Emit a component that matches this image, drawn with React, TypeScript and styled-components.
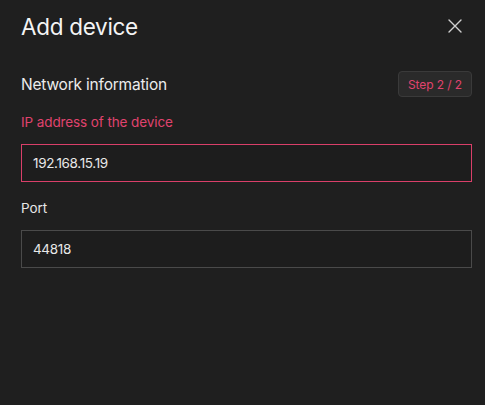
import styled, { createGlobalStyle } from 'styled-components'

const GlobalStyle = createGlobalStyle`
  html, body {
    margin: 0;
    padding: 0;
    background: #1f1f1f;
  }
  body {
    font-family: Inter, "Noto Sans", sans-serif;
    color: #f2f2f2;
  }
`;

const Panel = styled.div`
  width: 485px;
  height: 405px;
  box-sizing: border-box;
  background: #1f1f1f;
  padding: 12px 16px 0 21px;
`;

const Header = styled.header`
  display: flex;
  justify-content: space-between;
  align-items: center;
  height: 28px;
`;

const Title = styled.h1`
  margin: 0;
  font-size: 22.5px;
  font-weight: 400;
  letter-spacing: -0.3px;
  color: #f4f4f4;
`;

const CloseButton = styled.button`
  width: 28px;
  height: 28px;
  display: flex;
  align-items: center;
  justify-content: center;
  border: none;
  background: transparent;
  padding: 0;
  cursor: pointer;
`;

const SectionRow = styled.div`
  display: flex;
  justify-content: space-between;
  align-items: center;
  margin-top: 31px;
  width: 451px;
`;

const SectionTitle = styled.h2`
  margin: 0;
  font-size: 15.5px;
  font-weight: 400;
  letter-spacing: -0.2px;
  color: #ececec;
`;

const StepBadge = styled.span`
  box-sizing: border-box;
  height: 26px;
  width: 74px;
  justify-content: center;
  display: inline-flex;
  align-items: center;
  border-radius: 4px;
  background: #2a2a2a;
  border: 1px solid #3a3a3a;
  color: #e0436e;
  font-size: 12px;
  letter-spacing: -0.1px;
`;

const Field = styled.div<{ $first?: boolean }>`
  display: flex;
  flex-direction: column;
  gap: 14px;
  width: 451px;
  margin-top: ${(p) => (p.$first ? '17px' : '18px')};
`;

const Label = styled.label<{ $error?: boolean }>`
  font-size: 13.5px;
  letter-spacing: -0.1px;
  color: ${(p) => (p.$error ? '#e0436e' : '#e6e6e6')};
`;

const Input = styled.input<{ $error?: boolean }>`
  box-sizing: border-box;
  width: 100%;
  height: 38px;
  padding: 0 11px;
  background: #1d1d1d;
  border: 1px solid ${(p) => (p.$error ? '#d93f69' : '#4a4a4a')};
  border-radius: 0;
  color: #e8e8e8;
  font-family: Inter, "Noto Sans", sans-serif;
  font-size: 13.5px;
  letter-spacing: -0.35px;
  outline: none;
`;

export default function App() {
  return (
    <>
      <GlobalStyle />
      <Panel>
        <Header>
          <Title>Add device</Title>
          <CloseButton aria-label="Close">
            <svg width="14" height="14" viewBox="0 0 14 14">
              <path d="M1 1L13 13M13 1L1 13" stroke="#d0d0d0" strokeWidth="1.4" strokeLinecap="round" />
            </svg>
          </CloseButton>
        </Header>
        <SectionRow>
          <SectionTitle>Network information</SectionTitle>
          <StepBadge>Step 2 / 2</StepBadge>
        </SectionRow>
        <Field $first>
          <Label $error>IP address of the device</Label>
          <Input $error defaultValue="192.168.15.19" />
        </Field>
        <Field>
          <Label>Port</Label>
          <Input defaultValue="44818" />
        </Field>
      </Panel>
    </>
  )
}
